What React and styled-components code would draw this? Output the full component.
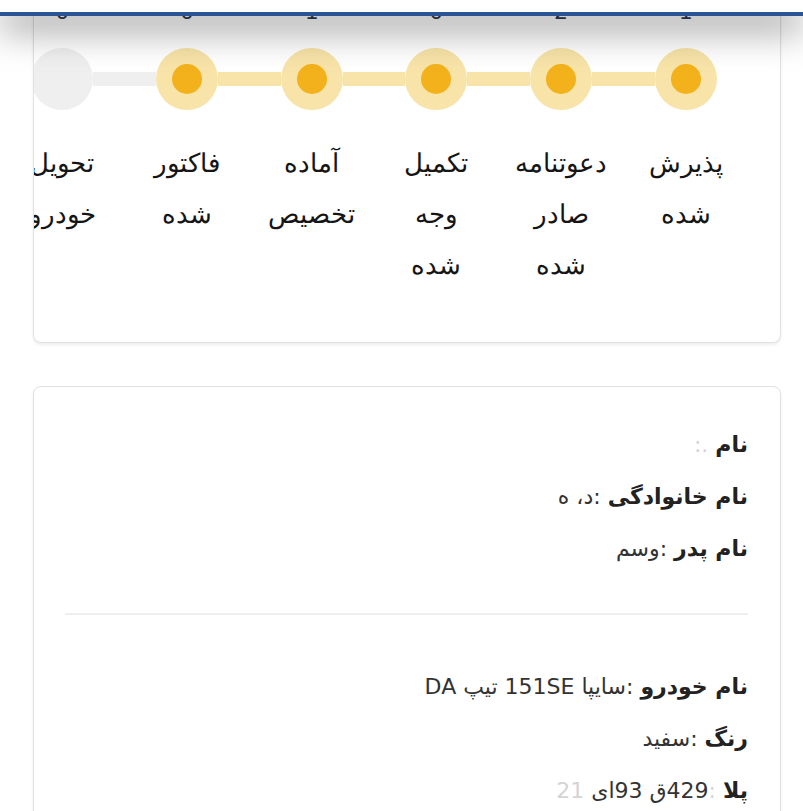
import React from "react";
import styled, { createGlobalStyle } from "styled-components";

const GlobalStyle = createGlobalStyle`
  html, body {
    margin: 0;
    padding: 0;
    background: #fff;
  }
  body {
    direction: rtl;
    overflow: hidden;
    font-family: "DejaVu Sans", "Noto Sans", sans-serif;
  }
  * {
    box-sizing: border-box;
  }
`;

const TopBar = styled.header`
  position: fixed;
  top: 0;
  left: 0;
  right: 0;
  height: 16px;
  background: #fff;
  border-bottom: 4px solid #2a5592;
  box-shadow: 0 10px 38px rgba(0, 0, 0, 0.62);
  z-index: 10;
`;

const Page = styled.main`
  display: flex;
  flex-direction: column;
  gap: 43px;
  padding-left: 33px;
  padding-right: 22px;
  margin-top: -28px;
`;

const Card = styled.section`
  background: #fff;
  border: 1px solid #e1e1e1;
  border-radius: 8px;
  box-shadow: 0 2px 3px rgba(0, 0, 0, 0.07);
`;

const StatusCard = styled(Card)`
  overflow: hidden;
  padding: 21px 32px 51px 0;
`;

const InfoCard = styled(Card)`
  padding: 32px 32px 40px 31px;
`;

const StepGrid = styled.div`
  width: 748px;
  display: grid;
  grid-template-columns: repeat(6, 1fr);
`;

const DateRow = styled(StepGrid)`
  font-size: 22px;
  line-height: 36px;
  color: #2d3a4a;
  text-align: center;
`;

const Track = styled.div`
  width: 748px;
  display: flex;
  align-items: center;
  padding: 0 31px;
  margin-top: 18px;
`;

const Dot = styled.div`
  flex: 0 0 62px;
  height: 62px;
  border-radius: 50%;
  display: grid;
  place-items: center;
  background: ${(p) => (p.$done ? "#f8e4a8" : "#efefef")};
`;

const Core = styled.span`
  width: 30px;
  height: 30px;
  border-radius: 50%;
  background: #f3b11b;
`;

const Link = styled.div`
  flex: 1;
  height: 14px;
  background: ${(p) => (p.$done ? "#f8e4a8" : "#efefef")};
`;

const Labels = styled(StepGrid)`
  margin-top: 28px;
`;

const Label = styled.div`
  justify-self: center;
  width: min-content;
  text-align: center;
  font-size: 26px;
  font-weight: 300;
  line-height: 51px;
  color: #151515;
`;

const Row = styled.p`
  margin: 0;
  font-size: 22px;
  line-height: 52px;
  color: #333;
`;

const Key = styled.b`
  font-weight: 700;
  color: #222;
`;

const Faint = styled.span`
  color: #d4d4d4;
`;

const Divider = styled.hr`
  border: 0;
  height: 2px;
  background: #efefef;
  margin: 38px 0 46px;
`;

const steps = [
  { title: "پذیرش شده", done: true, date: "1" },
  { title: "دعوتنامه صادر شده", done: true, date: "2" },
  { title: "تکمیل وجه شده", done: true, date: "0" },
  { title: "آماده تخصیص", done: true, date: "1" },
  { title: "فاکتور شده", done: true, date: "0" },
  { title: "تحویل خودرو", done: false, date: "0" },
];

export default function App() {
  return (
    <>
      <GlobalStyle />
      <TopBar />
      <Page>
        <StatusCard>
          <DateRow>
            {steps.map((s, i) => (
              <span key={i}>{s.date}</span>
            ))}
          </DateRow>
          <Track>
            {steps.map((s, i) => (
              <React.Fragment key={i}>
                {i > 0 && <Link $done={s.done} />}
                <Dot $done={s.done}>{s.done && <Core />}</Dot>
              </React.Fragment>
            ))}
          </Track>
          <Labels>
            {steps.map((s, i) => (
              <Label key={i}>{s.title}</Label>
            ))}
          </Labels>
        </StatusCard>

        <InfoCard>
          <Row>
            <Key>نام</Key> <Faint>    .:</Faint>
          </Row>
          <Row>
            <Key>نام خانوادگی</Key> :د،  ه
          </Row>
          <Row>
            <Key>نام پدر</Key> :وسم
          </Row>
          <Divider />
          <Row>
            <Key>نام خودرو</Key> :سایپا 151SE تیپ DA
          </Row>
          <Row>
            <Key>رنگ</Key> :سفید
          </Row>
          <Row>
            <Key>پلا</Key> <Faint>:</Faint>429ق 93ای <Faint>21</Faint>
          </Row>
        </InfoCard>
      </Page>
    </>
  );
}
